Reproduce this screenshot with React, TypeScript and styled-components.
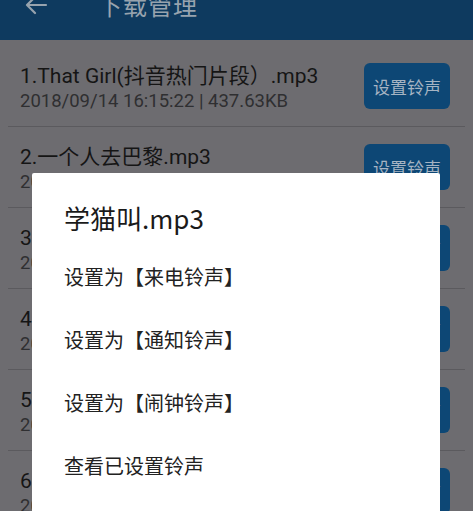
import React from "react";
import styled, { createGlobalStyle } from "styled-components";

const Global = createGlobalStyle`
  html, body { margin: 0; padding: 0; }
  body {
    width: 473px;
    height: 511px;
    overflow: hidden;
    background: #6d6c70;
    font-family: Roboto, "Noto Sans CJK SC", "Noto Sans", sans-serif;
  }
`;

const Screen = styled.div`
  position: relative;
  width: 473px;
  height: 511px;
  overflow: hidden;
  background: #6d6c70;
`;

const Header = styled.header`
  height: 40px;
  background: #0e3a5f;
  display: flex;
  align-items: flex-start;
  overflow: hidden;
`;

const HeaderInner = styled.div`
  display: flex;
  align-items: center;
  gap: 50px;
  margin-top: -8px;
  padding-left: 24px;
  height: 26px;
`;

const HeaderTitle = styled.span`
  font-family: "Noto Sans CJK SC", sans-serif;
  font-size: 24px;
  line-height: 26px;
  color: #97a3ae;
  letter-spacing: 1px;
`;

const List = styled.ul`
  list-style: none;
  margin: 0;
  padding: 6px 0 0;
`;

const Row = styled.li`
  height: 80px;
  margin: 0 8px;
  padding: 0 15px 0 12px;
  border-bottom: 1px solid #5b5a5e;
  display: flex;
  align-items: center;
  justify-content: space-between;
`;

const Info = styled.div`
  display: flex;
  flex-direction: column;
  padding-top: 5px;
  min-width: 0;
`;

const Name = styled.div`
  font-size: 21px;
  line-height: 25px;
  color: #151515;
  white-space: nowrap;
`;

const Meta = styled.div`
  font-size: 18.5px;
  line-height: 25px;
  color: #2f2f31;
  white-space: nowrap;
`;

const RingButton = styled.button`
  flex: none;
  width: 86px;
  height: 46px;
  border: none;
  border-radius: 6px;
  background: #0d4775;
  color: #a6b4c3;
  font-family: "Noto Sans CJK SC", sans-serif;
  font-size: 17px;
  padding: 0;
`;

const Dialog = styled.div`
  position: absolute;
  left: 32px;
  top: 173px;
  width: 408px;
  height: 360px;
  background: #ffffff;
  border-radius: 2px;
  font-family: "Noto Sans CJK SC", sans-serif;
`;

const DialogTitle = styled.div`
  padding: 31px 32px 0;
  height: 41px;
  font-size: 26px;
  line-height: 28px;
  color: #1a1a1a;
`;

const Option = styled.div`
  height: 63px;
  line-height: 63px;
  padding: 0 32px;
  font-size: 20px;
  color: #222222;
`;

const rows = [
  { name: "1.That Girl(抖音热门片段）.mp3", meta: "2018/09/14 16:15:22 | 437.63KB" },
  { name: "2.一个人去巴黎.mp3", meta: "2018/09/14 16:14:08 | 512.20KB" },
  { name: "3.学猫叫.mp3", meta: "2018/09/14 16:12:47 | 398.15KB" },
  { name: "4.沙漠骆驼.mp3", meta: "2018/09/14 16:10:33 | 468.92KB" },
  { name: "5.往后余生.mp3", meta: "2018/09/14 16:08:19 | 421.07KB" },
  { name: "6.体面.mp3", meta: "2018/09/14 16:05:51 | 455.38KB" },
];

const options = ["设置为【来电铃声】", "设置为【通知铃声】", "设置为【闹钟铃声】", "查看已设置铃声"];

export default function App() {
  return (
    <Screen>
      <Global />
      <Header>
        <HeaderInner>
          <svg width="24" height="20" viewBox="0 0 24 20" fill="none">
            <path d="M22 10H3M11 2L3 10l8 8" stroke="#97a3ae" strokeWidth="2.2" strokeLinecap="round" strokeLinejoin="round" />
          </svg>
          <HeaderTitle>下载管理</HeaderTitle>
        </HeaderInner>
      </Header>
      <List>
        {rows.map((r) => (
          <Row key={r.name}>
            <Info>
              <Name>{r.name}</Name>
              <Meta>{r.meta}</Meta>
            </Info>
            <RingButton>设置铃声</RingButton>
          </Row>
        ))}
      </List>
      <Dialog>
        <DialogTitle>学猫叫.mp3</DialogTitle>
        {options.map((o) => (
          <Option key={o}>{o}</Option>
        ))}
      </Dialog>
    </Screen>
  );
}
